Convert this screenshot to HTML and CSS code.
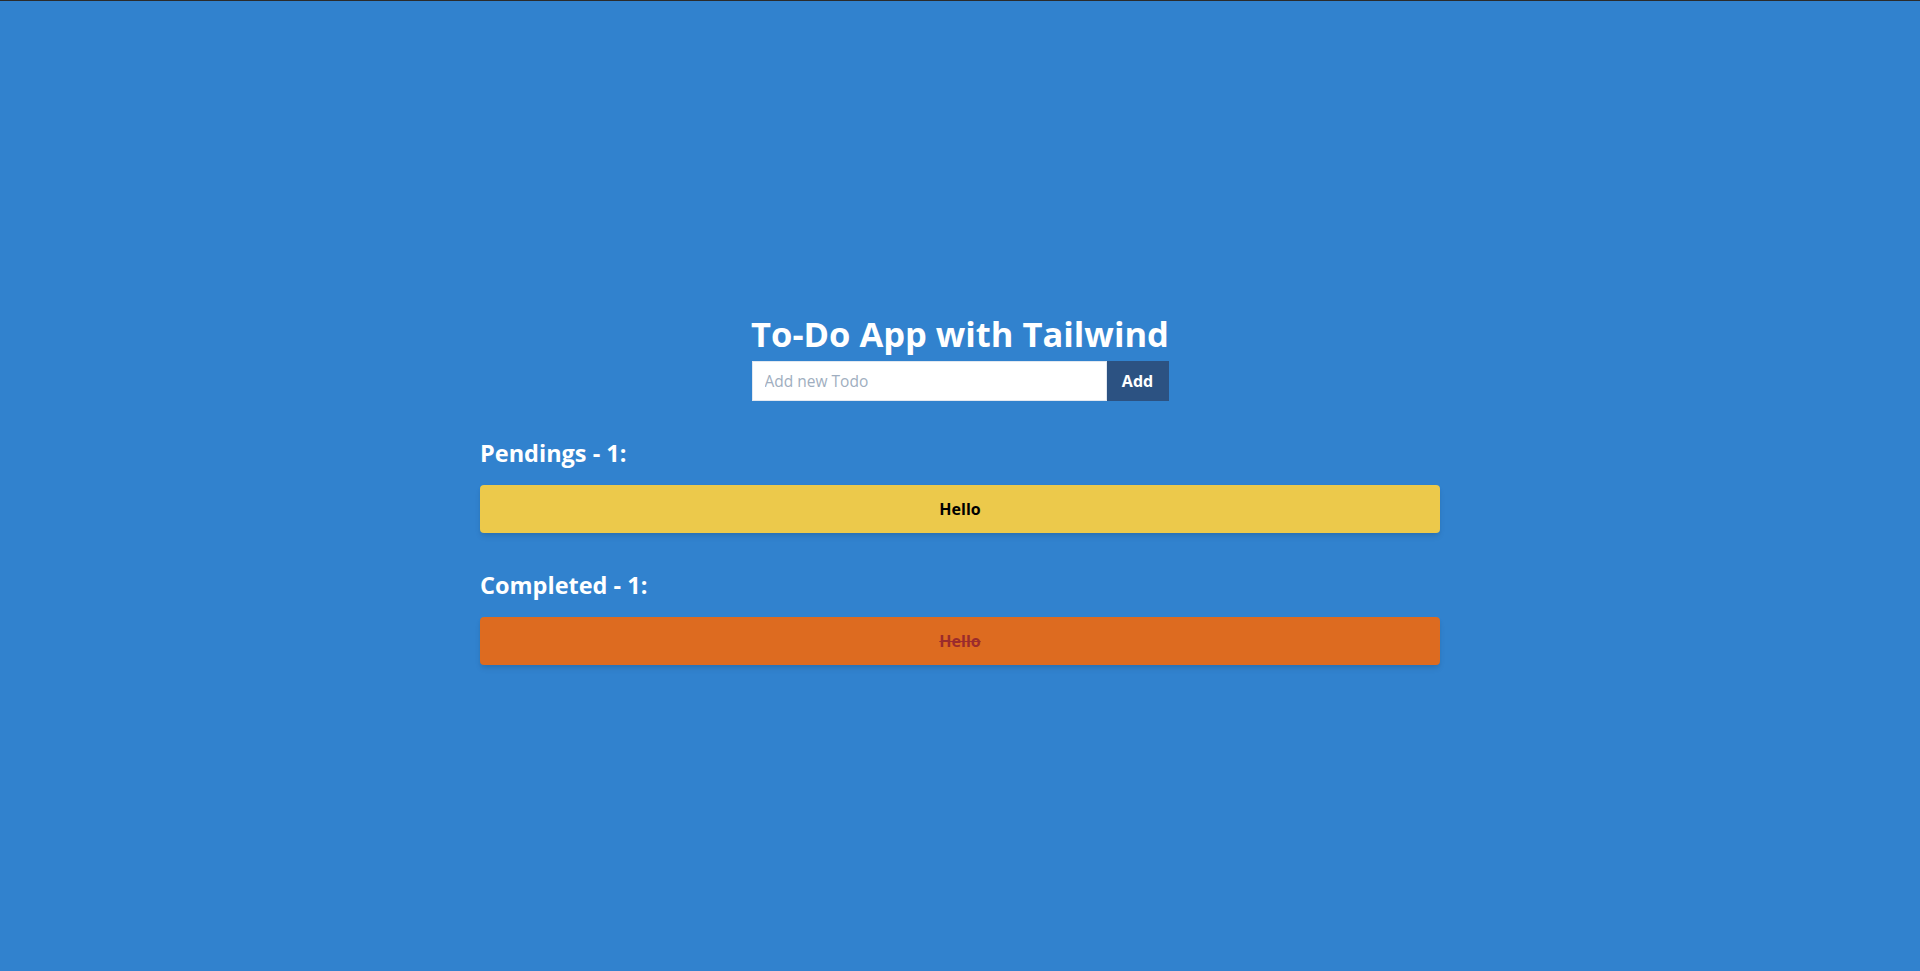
FILE: index.html
```html
<!DOCTYPE html>
<html lang="en">
<head>
<meta charset="utf-8">
<title>To-Do App with Tailwind</title>
<link rel="stylesheet" href="styles.css">
</head>
<body>
  <main class="app">
    <h1 class="title">To-Do App with Tailwind</h1>
    <form class="add-form">
      <input class="add-input" type="text" placeholder="Add new Todo">
      <button class="add-btn" type="button">Add</button>
    </form>
    <section class="list">
      <h2 class="list-title">Pendings - 1:</h2>
      <div class="todo todo-pending">Hello</div>
    </section>
    <section class="list">
      <h2 class="list-title">Completed - 1:</h2>
      <div class="todo todo-done">Hello</div>
    </section>
  </main>
</body>
</html>
```

FILE: styles.css
```css
* { box-sizing: border-box; }
html, body { height: 100%; }
body {
  margin: 0;
  background: #3182ce;
  border-top: 1px solid #2b2b2b;
  font-family: "Open Sans", "Noto Sans", sans-serif;
  color: #fff;
}
.app {
  min-height: 100%;
  display: flex;
  flex-direction: column;
  align-items: center;
  justify-content: center;
  padding-top: 6px;
}
.title {
  margin: 0;
  font-size: 34.5px;
  line-height: 40px;
  font-weight: 700;
}
.add-form {
  display: flex;
  margin-top: 7px;
  height: 40px;
}
.add-input {
  width: 355px;
  height: 40px;
  border: 1px solid #e2e8f0;
  padding: 0 12px;
  font-family: inherit;
  font-size: 15.5px;
  color: #4a5568;
  outline: none;
  caret-color: #2d3748;
}
.add-input::placeholder { color: #a0aec0; }
.add-btn {
  width: 62px;
  height: 40px;
  border: 0;
  background: #2c5282;
  color: #fff;
  font-family: inherit;
  font-weight: 700;
  font-size: 16px;
  padding: 0;
}
.list {
  width: 960px;
  margin-top: 36px;
}
.list-title {
  margin: 0 0 16px;
  font-size: 23.5px;
  line-height: 32px;
  font-weight: 700;
}
.todo {
  height: 48px;
  display: flex;
  align-items: center;
  justify-content: center;
  border-radius: 4px;
  font-size: 16px;
  font-weight: 700;
  box-shadow: 0 4px 6px -1px rgba(0,0,0,0.1), 0 2px 4px -1px rgba(0,0,0,0.06);
}
.todo-pending { background: #ecc94b; color: #000; }
.todo-done { background: #dd6b20; color: #9b2c2c; text-decoration: line-through; }
```
